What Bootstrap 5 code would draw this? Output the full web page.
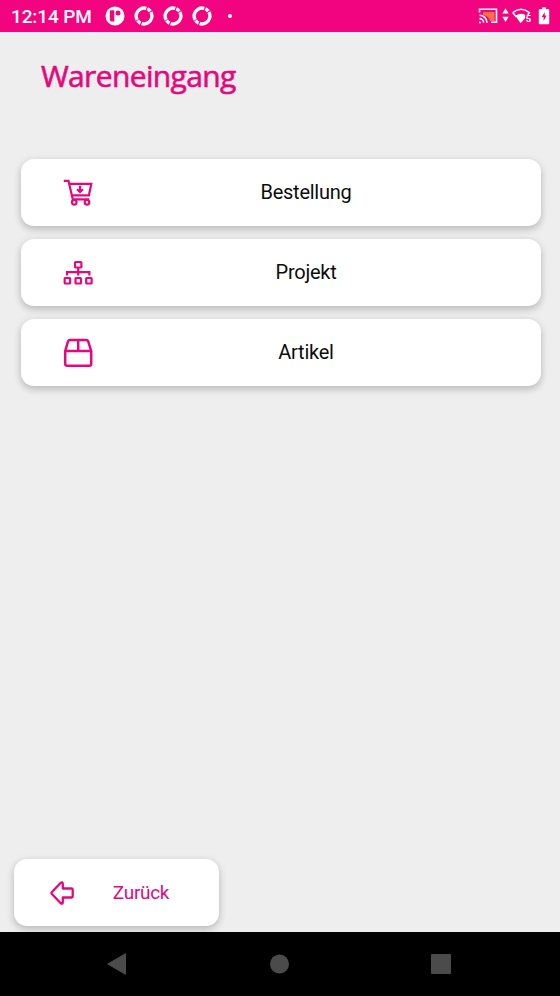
<!DOCTYPE html>
<html lang="de">
<head>
<meta charset="utf-8">
<meta name="viewport" content="width=device-width, initial-scale=1">
<title>Wareneingang</title>
<link href="https://cdn.jsdelivr.net/npm/bootstrap@5.3.0/dist/css/bootstrap.min.css" rel="stylesheet">
<style>
  :root { --magenta: #f2037f; --ink: #e5087d; }
  body { font-family: Roboto, sans-serif; background: #eee; height: 996px; overflow: hidden; }
  svg { display: block; flex: none; }
  .status-bar { height: 32px; background: var(--magenta); padding: 0 9px 0 11px; }
  .clock { font-size: 19px; font-weight: 500; letter-spacing: -.12px; line-height: 32px; width: 94px; white-space: nowrap; padding-top: 1px; }
  .notices { gap: 9px; }
  .dot { width: 4px; height: 4px; margin-left: 7px; }
  .page-title { font-family: "Open Sans", sans-serif; font-size: 30px; font-weight: 400; letter-spacing: -.64px; -webkit-text-stroke: .6px var(--ink); line-height: 40px; color: var(--ink); margin: 24px 0 0 41px; height: 103px; }
  .choices { padding: 0 19.500px 0 21px; gap: 13px; }
  .tile { height: 67px; border-radius: 13px; background: #fff; border: 0; color: #0c0c0c; font-size: 20px; line-height: 24px; letter-spacing: -.25px; box-shadow: 0 4px 7px rgba(0,0,0,.14), 0 1px 8px rgba(0,0,0,.1); }
  .tile span { padding-bottom: 1px; }
  .choice { padding: 0 21.500px 0 42px; }
  .back { width: 205px; margin: 0 0 6px 14px; padding: 0 12px 0 35px; color: var(--ink); font-size: 19px; letter-spacing: -.3px; }
  .nav-keys { height: 64px; background: #000; padding: 0 108px 0 107px; }
</style>
<script src="https://cdn.jsdelivr.net/npm/bootstrap@5.3.0/dist/js/bootstrap.bundle.min.js"></script>
</head>
<body class="d-flex flex-column m-0">
<header class="status-bar d-flex align-items-center text-white">
  <div class="clock">12:14 PM</div>
  <div class="notices d-flex align-items-center">
    <svg width="20" height="20" viewBox="0 0 20 20"><circle cx="10" cy="10" r="9.500" fill="#fff"/><path d="M4.800 5.500q0-1.200 1.200-1.200h3.300v11.200H6.800a2 2 0 0 1-2-2z" fill="#f2037f"/><circle cx="13" cy="6.900" r="2.500" fill="#f2037f"/></svg>
    <svg width="20" height="20" viewBox="0 0 20 20"><circle id="ring" cx="10" cy="10" r="7.900" fill="none" stroke="#fff" stroke-width="3.400" stroke-dasharray="18.700 1.100 3.900 1.119" transform="rotate(150 10 10)"/></svg>
    <svg width="20" height="20" viewBox="0 0 20 20"><use href="#ring"/></svg>
    <svg width="20" height="20" viewBox="0 0 20 20"><use href="#ring"/></svg>
    <span class="dot rounded-circle bg-white"></span>
  </div>
  <div class="d-flex align-items-center ms-auto">
    <svg width="73" height="20" viewBox="478 6 73 20">
      <path d="M483 12h11.500v9h-4.500c-.7-3.500-3-5.200-7-6z" fill="#ff7043"/>
      <path d="M479.500 12.500V9.300h17v13h-5.500M479.500 15.200a7.500 7.500 0 0 1 7.500 7.500M479.500 18.600a4.100 4.100 0 0 1 4.100 4.100" fill="none" stroke="#fff" stroke-width="1.600"/>
      <path d="M479 21.200a2 2 0 0 1 2 2h-2z" fill="#fff"/>
      <path d="M505.500 8.200l3.200 5.300h-6.400zM505.500 22l3.200-5.300h-6.400z" fill="#fff"/>
      <path d="M512.800 12.700Q521 5.800 529.400 12.700L527.700 14.800M512.800 12.700L516.400 17" fill="none" stroke="#fff" stroke-width="1.600"/>
      <path d="M515.300 15.800Q520.600 12.200 525.200 14.800V18L520.600 23.300z" fill="#fff"/>
      <text x="525.700" y="21.700" font-size="9.500" font-weight="700" fill="#fff">5</text>
      <path d="M542.200 7.200h3.600v1.700h2.500q.9 0 .9.900v13.500q0 .9-.9.900h-8.600q-.9 0-.9-.9v-13.500q0-.9.900-.9h2.500z" fill="#fff"/>
      <path d="M544.700 12l-3 5h1.900v4l3-5.400h-1.900z" fill="#d80a72"/>
    </svg>
  </div>
</header>
<main class="d-flex flex-column flex-grow-1">
  <h1 class="page-title">Wareneingang</h1>
  <div class="choices d-flex flex-column">
    <button class="tile choice d-flex align-items-center">
      <svg width="30" height="30" viewBox="0 0 30 30" fill="none" stroke="#e5087d" stroke-width="2.200"><path d="M.8 2.900h4.700L9.800 21.400h16.400M6.600 5.800h21.700l-2.400 11.500H9"/><path d="M17 7.800v6M14 11.200l3 2.700 3-2.700"/><circle cx="11.200" cy="24.300" r="2.300"/><circle cx="24" cy="24.300" r="2.300"/></svg>
      <span class="flex-grow-1 text-center">Bestellung</span>
    </button>
    <button class="tile choice d-flex align-items-center">
      <svg width="30" height="30" viewBox="0 0 30 30" fill="none" stroke="#e5087d" stroke-width="2.200"><rect x="12" y="4" width="6.400" height="5.500" rx=".7"/><path d="M15.200 9.500v8M4 17.400v-3.300h22.400v3.300"/><rect x="1.700" y="20" width="5.400" height="5.500" rx=".5"/><rect x="12.500" y="20" width="5.400" height="5.500" rx=".5"/><rect x="23.200" y="20" width="5.400" height="5.500" rx=".5"/></svg>
      <span class="flex-grow-1 text-center">Projekt</span>
    </button>
    <button class="tile choice d-flex align-items-center">
      <svg width="30" height="30" viewBox="0 0 30 30" fill="none" stroke="#e5087d" stroke-width="2.500" stroke-linejoin="round"><path d="M2.200 13L5 3.300Q5.500 1.900 7 1.900h16.200Q24.700 1.900 25.200 3.300L28.200 13v12.700q0 2-2 2h-22q-2 0-2-2zM2.200 13h26M15.200 1.900V13"/></svg>
      <span class="flex-grow-1 text-center">Artikel</span>
    </button>
  </div>
  <button class="tile back d-flex align-items-center mt-auto">
    <svg width="26" height="26" viewBox="0 0 26 26" fill="none" stroke="#e5087d" stroke-width="2.300" stroke-linejoin="round"><path d="M2.700 12.200L11.500 3Q13.800 1.300 13.800 4v4.500H22.500q1.200 0 1.200 1.200v6.600q0 1.200-1.200 1.200h-8.700V22q0 2.700-2.300 1L2.700 13.800q-.7-.8 0-1.600z"/></svg>
    <span class="flex-grow-1 text-center pb-0">Zurück</span>
  </button>
</main>
<footer class="nav-keys d-flex justify-content-between align-items-center">
  <svg width="20" height="22" viewBox="0 0 20 22"><path d="M.7 11L18.500.7V21.300z" fill="#4b4b4b" stroke="#4b4b4b" stroke-linejoin="round"/></svg>
  <svg width="20" height="20" viewBox="0 0 20 20"><circle cx="10.500" cy="10" r="9.500" fill="#4b4b4b"/></svg>
  <svg width="21" height="20" viewBox="0 0 21 20"><rect width="20" height="20" rx="1" fill="#4b4b4b"/></svg>
</footer>
</body>
</html>
